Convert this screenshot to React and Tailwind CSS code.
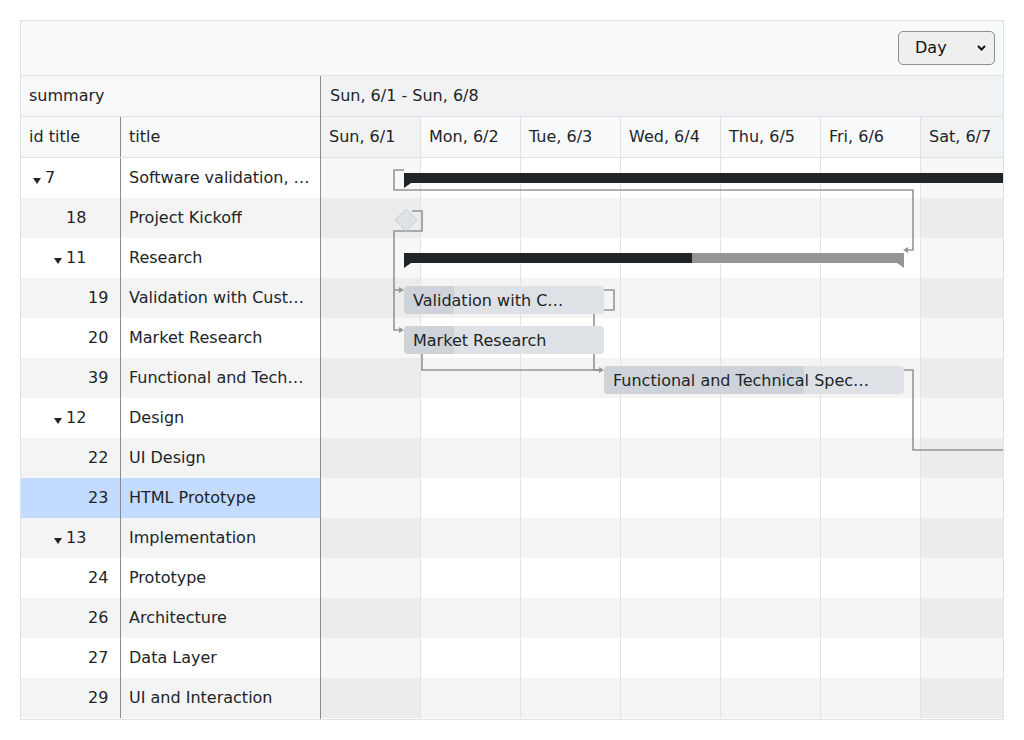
import { useState } from 'react';

const rows = [
  { id: 7, level: 0, parent: true, title: 'Software validation, research and implementation' },
  { id: 18, level: 1, title: 'Project Kickoff' },
  { id: 11, level: 1, parent: true, title: 'Research' },
  { id: 19, level: 2, title: 'Validation with Customers' },
  { id: 20, level: 2, title: 'Market Research' },
  { id: 39, level: 2, title: 'Functional and Technical Specifications' },
  { id: 12, level: 1, parent: true, title: 'Design' },
  { id: 22, level: 2, title: 'UI Design' },
  { id: 23, level: 2, title: 'HTML Prototype' },
  { id: 13, level: 1, parent: true, title: 'Implementation' },
  { id: 24, level: 2, title: 'Prototype' },
  { id: 26, level: 2, title: 'Architecture' },
  { id: 27, level: 2, title: 'Data Layer' },
  { id: 29, level: 2, title: 'UI and Interaction' },
];

const days = [
  { label: 'Sun, 6/1', weekend: true },
  { label: 'Mon, 6/2' },
  { label: 'Tue, 6/3' },
  { label: 'Wed, 6/4' },
  { label: 'Thu, 6/5' },
  { label: 'Fri, 6/6' },
  { label: 'Sat, 6/7', weekend: true },
  { label: 'Sun, 6/8', weekend: true },
];

const indent = ['pl-[8px]', 'pl-[29px]', 'pl-[51px]'];

const Toggle = () => (
  <span className="w-4 flex items-center justify-center pt-[5px]">
    <svg width="8" height="6" viewBox="0 0 8 6">
      <polygon points="0,0 8,0 4,6" fill="#212529" />
    </svg>
  </span>
);

const TaskBar = ({ className, progress, text }) => (
  <div className={`absolute h-[28px] rounded-[4px] bg-[#dee1e6] overflow-hidden ${className}`}>
    <div className={`absolute left-0 top-0 h-full bg-[#ced3d9] ${progress}`} />
    <div className="relative h-full flex items-center pl-[9px] pr-[31px] pt-px whitespace-nowrap">
      <span className="truncate">{text}</span>
    </div>
  </div>
);

const Links = () => {
  const line = { fill: 'none', stroke: '#959595', strokeWidth: 1.6 };
  return (
    <svg className="absolute left-0 top-0 pointer-events-none" width="800" height="560">
      {/* summary 7 -> 11 */}
      <polyline points="83,12 73,12 73,32 592,32 592,92 586,92" {...line} />
      <polygon points="582,92 587,89 587,95" fill="#959595" />
      {/* milestone 18 -> 19, 20 */}
      <polyline points="91,53 101,53 101,73 73,73 73,172 79,172" {...line} />
      <polyline points="73,132 79,132" {...line} />
      <polygon points="83,132 78,129 78,135" fill="#959595" />
      <polygon points="83,172 78,169 78,175" fill="#959595" />
      {/* 19 -> 39 */}
      <polyline points="283,132 293,132 293,152 273,152 273,212 279,212" {...line} />
      {/* 20 -> 39 */}
      <polyline points="101,196 101,212 279,212" {...line} />
      <polygon points="283,212 278,209 278,215" fill="#959595" />
      {/* 39 -> next */}
      <polyline points="583,212 592,212 592,292 700,292" {...line} />

      {/* summary 7 */}
      <rect x="83" y="15" width="700" height="10" fill="#202327" />
      <polygon points="83,25 90,25 83,30" fill="#202327" />
      {/* milestone 18 */}
      <polygon points="85,51 96,62 85,73 74,62" fill="#dee1e6" stroke="#c9ced4" strokeWidth="1" />
      {/* summary 11 */}
      <rect x="83" y="95" width="500" height="10" fill="#959595" />
      <rect x="83" y="95" width="288" height="10" fill="#202327" />
      <polygon points="83,105 90,105 83,110" fill="#202327" />
      <polygon points="583,105 576,105 583,110" fill="#959595" />
    </svg>
  );
};

export default function App() {
  const [scale, setScale] = useState('day');

  return (
    <div className="p-5 font-['DejaVu_Sans',sans-serif] text-[16px] text-[#212529]">
      <div className="w-[984px] h-[700px] border border-[#dee2e6] flex flex-col overflow-hidden">
        {/* toolbar */}
        <div className="h-[55px] shrink-0 bg-[#f8f9fa] border-b border-[#dee2e6] flex items-center justify-end pr-2">
          <div className="relative">
            <select
              value={scale}
              onChange={(e) => setScale(e.target.value)}
              className="appearance-none w-[97px] h-[34px] rounded-[5px] border border-[#8f8f8f] bg-[#efefef] pl-4 text-[16px] text-[#111] outline-none"
            >
              <option value="day">Day</option>
              <option value="week">Week</option>
              <option value="month">Month</option>
            </select>
            <svg className="absolute right-[9px] top-[14px] pointer-events-none" width="9" height="6" viewBox="0 0 9 6">
              <polyline points="1,1 4.5,4.5 8,1" fill="none" stroke="#111" strokeWidth="2" />
            </svg>
          </div>
        </div>

        <div className="flex flex-1 min-h-0">
          {/* left grid */}
          <div className="w-[300px] shrink-0 border-r border-[#8c8c8c] flex flex-col">
            <div className="h-[41px] shrink-0 bg-[#f8f9fa] border-b border-[#dee2e6] flex items-center px-2">summary</div>
            <div className="h-[41px] shrink-0 bg-[#f8f9fa] border-b border-[#dee2e6] flex">
              <div className="w-[100px] border-r border-[#8c8c8c] flex items-center px-2">id title</div>
              <div className="flex-1 flex items-center px-2">title</div>
            </div>
            {rows.map((row, i) => {
              const bg = row.id === 23 ? 'bg-[#c2dbfe]' : i % 2 ? 'bg-[#f4f4f4]' : 'bg-white';
              return (
                <div key={row.id} className={`h-[40px] shrink-0 flex ${bg}`}>
                  <div className={`w-[100px] border-r border-[#8c8c8c] flex items-center ${indent[row.level]}`}>
                    {row.parent ? <Toggle /> : <span className="w-4" />}
                    <span>{row.id}</span>
                  </div>
                  <div className="flex-1 min-w-0 flex items-center pl-2 pr-[10px]">
                    <span className="truncate">{row.title}</span>
                  </div>
                </div>
              );
            })}
          </div>

          {/* timeline */}
          <div className="flex-1 min-w-0 overflow-hidden flex flex-col">
            <div className="h-[41px] shrink-0 bg-[#f1f2f4] border-b border-[#dee2e6] flex items-center px-[9px] whitespace-nowrap">
              Sun, 6/1 - Sun, 6/8
            </div>
            <div className="h-[41px] shrink-0 border-b border-[#dee2e6] flex">
              {days.map((d) => (
                <div
                  key={d.label}
                  className={`w-[100px] shrink-0 border-r border-[#dee2e6] flex items-center px-[8px] whitespace-nowrap ${d.weekend ? 'bg-[#f1f2f4]' : 'bg-[#f8f9fa]'}`}
                >
                  {d.label}
                </div>
              ))}
            </div>
            <div className="relative flex-1">
              {rows.map((row, i) => (
                <div key={row.id} className={`h-[40px] flex ${i % 2 ? 'bg-[#f4f4f4]' : 'bg-white'}`}>
                  {days.map((d) => (
                    <div
                      key={d.label}
                      className={`w-[100px] shrink-0 border-r border-[#e2e2e2] ${d.weekend ? 'bg-black/[0.03]' : ''}`}
                    />
                  ))}
                </div>
              ))}
              <Links />
              <TaskBar className="left-[83px] top-[128px] w-[200px]" progress="w-[50px]" text="Validation with Customers" />
              <TaskBar className="left-[83px] top-[168px] w-[200px]" progress="w-[50px]" text="Market Research" />
              <TaskBar className="left-[283px] top-[208px] w-[300px]" progress="w-[200px]" text="Functional and Technical Specifications" />
            </div>
          </div>
        </div>
      </div>
    </div>
  );
}
